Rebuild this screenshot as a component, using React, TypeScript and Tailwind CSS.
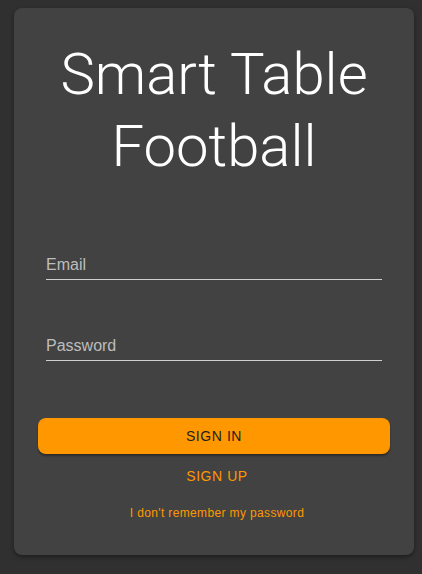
import React from "react";

export default function App() {
  return (
    <div className="h-screen w-[422px] overflow-hidden bg-[#303030] pl-[14px] pt-[8px]" style={{ fontFamily: '"Liberation Sans", Arial, sans-serif' }}>
      <div className="flex h-[547px] w-[400px] flex-col rounded-lg bg-[#424242] shadow-[0_2px_4px_rgba(0,0,0,0.4)]">
        <h1 className="pt-[30px] text-center text-[58px] font-light leading-[72px] text-white" style={{ fontFamily: 'Roboto, "Liberation Sans", sans-serif' }}>
          Smart Table
          <br />
          Football
        </h1>
        <div className="mt-[74px] flex flex-col gap-[57px] px-[32px]">
          <div className="border-b border-[#cfcfcf] pb-[5px]">
            <span className="block text-[16px] leading-[18px] text-[#bdbdbd]">Email</span>
          </div>
          <div className="border-b border-[#cfcfcf] pb-[5px]">
            <span className="block text-[16px] leading-[18px] text-[#bdbdbd]">Password</span>
          </div>
        </div>
        <div className="mt-[57px] px-[24px]">
          <button className="flex h-[36px] w-full items-center justify-center rounded-lg bg-[#ff9800] text-[14px] uppercase tracking-[0.04em] text-[#222] shadow-[0_2px_2px_rgba(0,0,0,0.35)]">
            Sign in
          </button>
        </div>
        <div className="mt-[12px] flex h-[20px] items-center justify-center pl-[6px] text-[14px] uppercase tracking-[0.04em] text-[#ff9800]">
          Sign up
        </div>
        <div className="mt-[17px] flex h-[20px] items-center justify-center pl-[6px] text-[12px] tracking-[0.03em] text-[#ff9800]">
          I don't remember my password
        </div>
      </div>
    </div>
  );
}
